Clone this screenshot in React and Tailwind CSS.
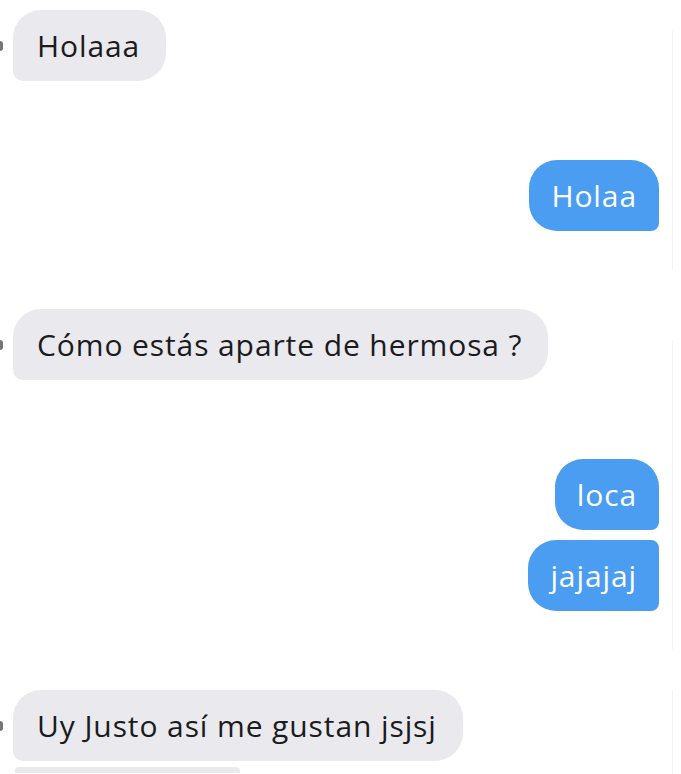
import React from 'react';

const font = { fontFamily: '"Open Sans", Lato, sans-serif' };

const Left = ({ text, top }) => (
  <div className={`flex items-center ${top}`}>
    <span className="w-[3px] h-[10px] rounded-r-full bg-[#3a3a3a] opacity-70" />
    <div className="ml-[10px] h-[71px] flex items-center pl-[24px] pr-[26px] bg-[#e9e9ee] text-[#1b1b1d] text-[30px] tracking-[0.9px] rounded-[28px] rounded-bl-[10px]">
      {text}
    </div>
  </div>
);

const Right = ({ text, top, shape }) => (
  <div className={`flex justify-end pr-[22px] ${top}`}>
    <div className={`h-[71px] flex items-center px-[22px] bg-[#4a9df0] text-white text-[30px] tracking-[0.9px] ${shape}`}>
      {text}
    </div>
  </div>
);

export default function App() {
  return (
    <div className="w-[681px] h-[774px] overflow-hidden bg-white relative" style={font}>
      <div className="absolute right-[8px] top-[30px] h-[240px] w-px bg-[#f3f3f5]" />
      <div className="absolute right-[8px] top-[340px] h-[310px] w-px bg-[#f3f3f5]" />
      <div className="absolute right-[8px] top-[690px] h-[84px] w-px bg-[#f3f3f5]" />
      <div className="pt-[10px] flex flex-col">
        <Left text="Holaaa" top="" />
        <Right text="Holaa" top="mt-[79px]" shape="rounded-[28px] rounded-br-[8px]" />
        <Left text="Cómo estás aparte de hermosa ?" top="mt-[78px]" />
        <Right text="loca" top="mt-[79px]" shape="rounded-[28px] rounded-br-[8px]" />
        <Right text="jajajaj" top="mt-[10px]" shape="rounded-[28px] rounded-tr-[8px] rounded-br-[8px]" />
        <Left text="Uy Justo así me gustan jsjsj" top="mt-[79px]" />
        <div className="ml-[15px] mt-[6px] w-[225px] h-[6px] rounded-t-[4px] bg-[#e9e9ee]" />
      </div>
    </div>
  );
}
